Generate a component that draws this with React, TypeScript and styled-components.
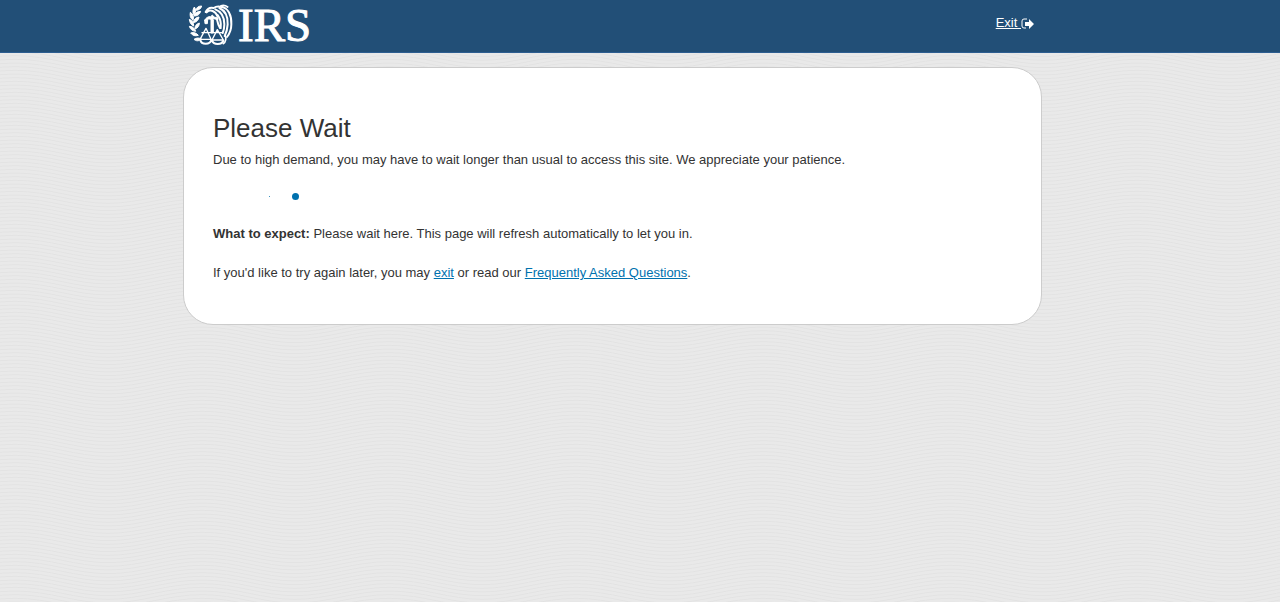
import React from "react";
import styled, { createGlobalStyle, keyframes } from "styled-components";

const waveLines = Array.from({ length: 8 }, (_, i) => (i * 11) / 3 - 14)
  .map(
    (y) =>
      `<path d='M-85 ${y + 12}C-50 ${y + 12} -20 ${y} 15 ${y}S75 ${y + 12} 108 ${y + 12}S167 ${y} 202 ${y}'/>`
  )
  .join("");

const waveTile = encodeURIComponent(
  `<svg xmlns='http://www.w3.org/2000/svg' width='187' height='11'><g fill='none' stroke='#e3e3e3' stroke-width='1'>${waveLines}</g></svg>`
);

const GlobalStyle = createGlobalStyle`
  *, *::before, *::after { box-sizing: border-box; }
  body {
    margin: 0;
    min-height: 100vh;
    background: #e9e9e9 url("data:image/svg+xml,${waveTile}");
    color: #333;
    font: 13px/18px Arial, "Liberation Sans", sans-serif;
  }
`;

const Header = styled.header`
  background: #224f77;
  border-bottom: 1px solid #2d5e91;
  padding: 0 55px 0 0;
`;

const HeaderInner = styled.div`
  display: flex;
  justify-content: space-between;
  align-items: flex-start;
  max-width: 859px;
  height: 52px;
  margin: 0 auto;
  padding: 3px 8px 0 3px;
`;

const Logo = styled.a`
  display: flex;
  align-items: center;
  gap: 2px;
  height: 44px;
  color: #fff;
  text-decoration: none;
`;

const LogoText = styled.span`
  font: 47px/46px "Liberation Serif", "Times New Roman", serif;
  -webkit-text-stroke: 1px #fff;
`;

const ExitLink = styled.a`
  display: inline-flex;
  align-items: center;
  margin-top: 11px;
  color: #fff;
  white-space: pre;
`;

const Main = styled.main`
  padding: 14px 55px 14px 0;
`;

const Card = styled.section`
  max-width: 859px;
  margin: 0 auto;
  padding: 44px 29px 42px;
  background: #fff;
  border: 1px solid #ccc;
  border-radius: 30px;
`;

const Title = styled.h1`
  margin: 0;
  font-size: 26px;
  line-height: 32px;
  font-weight: 400;
`;

const Text = styled.p<{ $top: number }>`
  margin: ${(p) => p.$top}px 0 0;
`;

const TextLink = styled.a`
  color: #0071ae;
`;

const pulse = keyframes`
  from { opacity: 1; }
  to { opacity: 0.9; }
`;

const Loader = styled.div`
  display: flex;
  align-items: center;
  gap: 22px;
  height: 8px;
  margin-top: 23px;
  padding-left: 56px;
`;

const Dot = styled.span<{ $size: number }>`
  width: ${(p) => p.$size}px;
  height: ${(p) => p.$size}px;
  border-radius: 50%;
  background: #0071ae;
  animation: ${pulse} 1s infinite alternate;
`;

function EagleEmblem() {
  return (
    <svg width="50" height="44" viewBox="0 0 150 132" aria-hidden="true">
      <g fill="#fff" stroke="#fff" strokeWidth="3" strokeLinejoin="round">
        <path d="M47 9c-9 0-16 4-18 13 9 0 16-4 18-13z" />
        <path d="M25 12c-5 8-6 17-1 24 6-8 6-17 1-24z" />
        <path d="M44 25c-9 0-17 4-20 14 10 0 17-4 20-14z" />
        <path d="M13 28c-2 10 0 18 8 24 3-9 1-18-8-24z" />
        <path d="M39 42c-9 1-16 7-17 17 10-2 16-8 17-17z" />
        <path d="M10 49c1 9 4 16 13 20 0-10-4-17-13-20z" />
        <path d="M40 60c-9 3-14 9-13 18 9-3 13-10 13-18z" />
        <path d="M10 70c3 9 9 14 19 15-3-9-9-15-19-15z" />
        <path d="M14 90c6 8 13 10 23 7-6-7-13-10-23-7z" />
        <path d="M24 109c7 6 14 6 22-1-7-4-15-4-22 1z" />
        <path d="M75 50h7v40h-7z" />
        <path d="M56 51c3-2 5-2 9 0l-1 11h-7zM56 52c4-8 11-12 18-11l5-5 5 6 12 3v5l-13-3-5 4-6-3c-6 0-9 2-12 6z" />
      </g>
      <g fill="none" stroke="#fff" strokeLinejoin="round" strokeLinecap="round">
        <path d="M59 27c5-10 14-15 24-12 8-6 17-6 26-2M62 28c11-10 26-5 33 13" strokeWidth="6" />
        <path d="M88 19c19 7 27 24 27 45 0 10-2 19-5 26M100 15c18 8 26 27 25 49-1 15-4 26-9 35M106 10c21 7 31 26 30 54 0 16-5 28-13 38" strokeWidth="6" />
        <path d="M95 36c8 11 11 24 9 39M93 50c2 10 4 17 9 25" strokeWidth="6" />
        <path d="M48 89h61M60 76l-18 33h33zM94 80l-16 31h34z" strokeWidth="4" />
        <path d="M43 111c3 15 29 15 33 0M79 113c3 13 29 13 33 0" strokeWidth="6" />
        <path d="M118 98c3 9 1 18-6 24M105 8c6-2 14-1 20 4" strokeWidth="5" />
      </g>
    </svg>
  );
}

function ExitIcon() {
  return (
    <svg width="13" height="12" viewBox="0 0 13 12" aria-hidden="true">
      <path d="M6 2H3Q1 2 1 4v5q0 2 2 2h2" fill="none" stroke="#fff" strokeWidth="1" />
      <path d="M4 5h4V2l5 5-5 5V9H4z" fill="#fff" />
    </svg>
  );
}

export default function App() {
  return (
    <>
      <GlobalStyle />
      <Header>
        <HeaderInner>
          <Logo href="#" aria-label="IRS">
            <EagleEmblem />
            <LogoText>IRS</LogoText>
          </Logo>
          <ExitLink href="#exit">
            <span>Exit </span>
            <ExitIcon />
          </ExitLink>
        </HeaderInner>
      </Header>
      <Main>
        <Card>
          <Title>Please Wait</Title>
          <Text $top={7}>
            Due to high demand, you may have to wait longer than usual to access this site. We
            appreciate your patience.
          </Text>
          <Loader role="status" aria-label="Loading">
            <Dot $size={1} />
            <Dot $size={7} />
          </Loader>
          <Text $top={25}>
            <strong>What to expect:</strong> Please wait here. This page will refresh automatically
            to let you in.
          </Text>
          <Text $top={21}>
            If you'd like to try again later, you may <TextLink href="#exit">exit</TextLink> or read
            our <TextLink href="#faq">Frequently Asked Questions</TextLink>.
          </Text>
        </Card>
      </Main>
    </>
  );
}
